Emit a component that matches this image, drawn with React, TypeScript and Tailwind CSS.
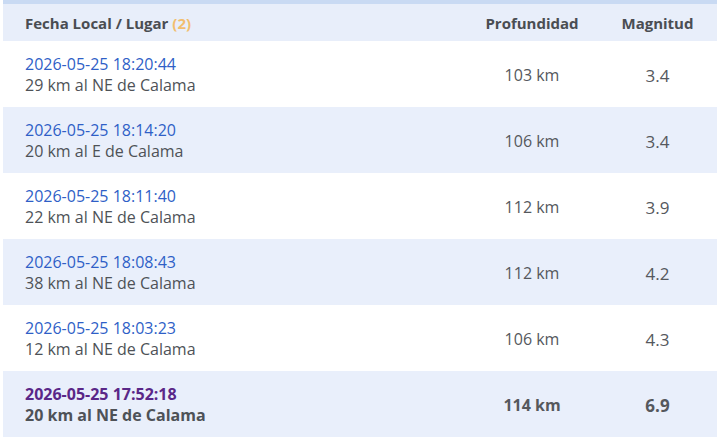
import React from "react";

const rows = [
  { d: "2026-05-25 18:20:44", p: "29 km al NE de Calama", km: "103 km", m: "3.4" },
  { d: "2026-05-25 18:14:20", p: "20 km al E de Calama", km: "106 km", m: "3.4" },
  { d: "2026-05-25 18:11:40", p: "22 km al NE de Calama", km: "112 km", m: "3.9" },
  { d: "2026-05-25 18:08:43", p: "38 km al NE de Calama", km: "112 km", m: "4.2" },
  { d: "2026-05-25 18:03:23", p: "12 km al NE de Calama", km: "106 km", m: "4.3" },
  { d: "2026-05-25 17:52:18", p: "20 km al NE de Calama", km: "114 km", m: "6.9", main: true },
];

export default function App() {
  return (
    <div className="w-[717px] h-[442px] bg-white pl-[3px]" style={{ fontFamily: '"Open Sans", sans-serif' }}>
      <div className="border-t-[4px] border-[#c9daf3]">
        <div className="flex h-[37px] items-center bg-[#e8eefa] pt-[1px] text-[15px] font-bold text-[#4a4d52]">
          <div className="flex-1 pl-[22px]">
            Fecha Local / Lugar <span className="text-[#f2be6e]">(2)</span>
          </div>
          <div className="w-[132px] text-center">Profundidad</div>
          <div className="w-[119px] text-center">Magnitud</div>
        </div>
        {rows.map((r, i) => (
          <div
            key={i}
            className={`flex h-[66px] items-center pt-[2px] text-[16px] leading-[21px] ${i % 2 === 1 ? "bg-[#e9effb]" : "bg-white"} ${r.main ? "font-bold" : ""}`}
          >
            <div className="flex-1 pl-[22px]">
              <div className={r.main ? "text-[#5a2788]" : "text-[#2f5fc7]"}>{r.d}</div>
              <div className="text-[#4e5257]">{r.p}</div>
            </div>
            <div className="w-[132px] text-center text-[#55585d]">{r.km}</div>
            <div className="w-[119px] text-center text-[17px] text-[#55585d]">{r.m}</div>
          </div>
        ))}
      </div>
    </div>
  );
}
